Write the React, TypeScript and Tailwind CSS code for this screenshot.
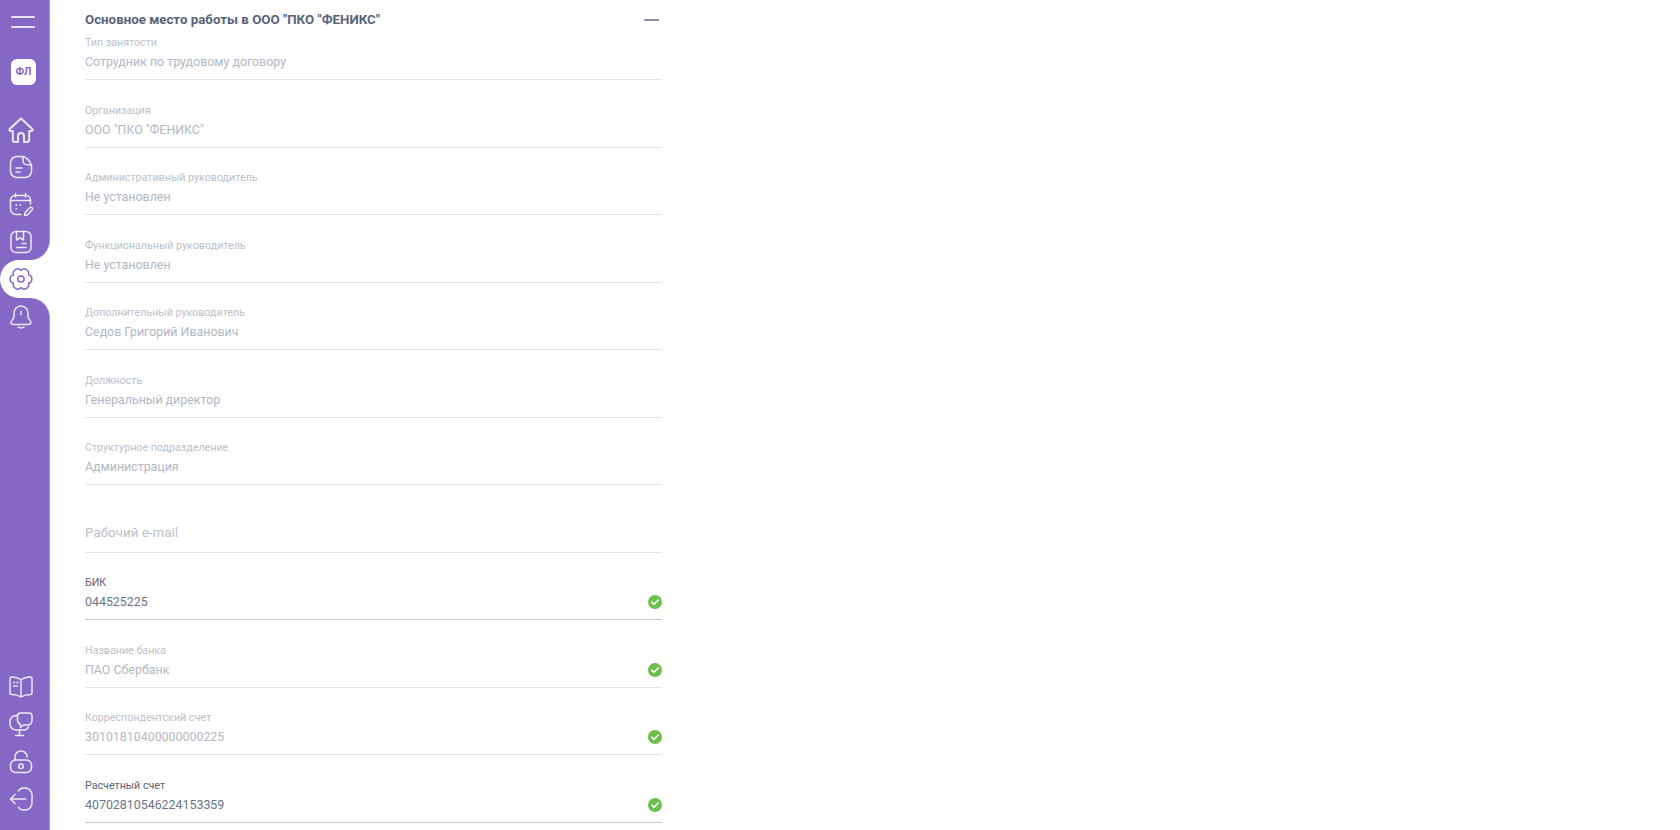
const stroke = { fill: "none", stroke: "currentColor", strokeWidth: 1.5, strokeLinecap: "round", strokeLinejoin: "round" } as const

const Glyph: React.FC<{ children: React.ReactNode }> = ({ children }) => (
  <svg viewBox="0 0 26 26" className="w-[26px] h-[26px]" {...stroke}>
    {children}
  </svg>
)

const HomeIcon = () => (
  <Glyph>
    <path
      strokeWidth={2}
      d="M13 1.5 L1.6 12 Q0.9 13.8 2.8 14 H4.8 V22.5 Q4.8 25 7.3 25 H10 V19 Q10 16 13 16 Q16 16 16 19 V25 H18.7 Q21.2 25 21.2 22.5 V14 H23.2 Q25.1 13.8 24.4 12 Z"
    />
  </Glyph>
)

const NoteIcon = () => (
  <Glyph>
    <path d="M15 2.5 H9 A6.5 6.5 0 0 0 2.5 9 V17 A6.5 6.5 0 0 0 9 23.5 H17 A6.5 6.5 0 0 0 23.5 17 V11 Q18 11.5 16 9.5 Q14.5 7.5 15 2.5 Q20.5 4 23.5 11" />
    <path d="M8 14 H14 M8 18 H12" />
  </Glyph>
)

const CalendarIcon = () => (
  <Glyph>
    <path d="M13 22.5 H8 A5.5 5.5 0 0 1 2.5 17 V8 A4.5 4.5 0 0 1 7 3.5 H18 A4.5 4.5 0 0 1 22.5 8 V12" />
    <path d="M2.5 8.5 H22.5 M7.5 1.5 V5 M17.5 1.5 V5" />
    <path d="M8 13 H8.6 M12 13 H12.6 M8 17 H8.6" />
    <path d="M16.5 23.5 L17 20.5 L22 15.5 Q23 14.8 24 15.8 Q25 16.8 24.2 17.8 L19.4 23 Z" />
  </Glyph>
)

const SavedIcon = () => (
  <Glyph>
    <rect x="3" y="2.5" width="20" height="21" rx="5" />
    <path d="M8.5 2.5 V11 L12 8.8 L15.5 11 V2.5" />
    <path d="M14 14.5 H18 M8.5 18.5 H18" />
  </Glyph>
)

const GearIcon = () => (
  <Glyph>
    <path d="M13 4.4 A4.4 4.4 0 0 1 20.45 8.7 A4.4 4.4 0 0 1 20.45 17.3 A4.4 4.4 0 0 1 13 21.6 A4.4 4.4 0 0 1 5.55 17.3 A4.4 4.4 0 0 1 5.55 8.7 A4.4 4.4 0 0 1 13 4.4 Z" />
    <circle cx="13" cy="13" r="3.1" />
  </Glyph>
)

const BellIcon = () => (
  <Glyph>
    <path d="M13 2 C8.5 2 6 5.5 6 9.5 V12.5 C6 15 2.5 17 3 19 Q3.4 20.5 6 20.5 H20 Q22.6 20.5 23 19 C23.5 17 20 15 20 12.5 V9.5 C20 5.5 17.5 2 13 2 Z" />
    <path d="M10 23 Q13 25 16 23 M13 7.5 V10.5" />
  </Glyph>
)

const BookIcon = () => (
  <Glyph>
    <path d="M13 6 C10 3.5 6.5 3 3.5 3 Q2 3 2 4.5 V19 Q2 20.5 3.5 20.5 C7 20.5 10 21 13 23 C16 21 19 20.5 22.5 20.5 Q24 20.5 24 19 V4.5 Q24 3 22.5 3 C19.5 3 16 3.5 13 6 Z M13 6 V23" />
    <path d="M5.5 8.5 H6.5 M9 8.5 H10 M5.5 12 H9.5" />
  </Glyph>
)

const MonitorIcon = () => (
  <Glyph>
    <path d="M9.5 4.5 H8 A6 6 0 0 0 2 10.5 V13 A6 6 0 0 0 8 19 H15 A5.5 5.5 0 0 0 20.5 16" />
    <path d="M9.5 5 A3 3 0 0 1 12.5 2 H21 A3 3 0 0 1 24 5 V9.5 A4.5 4.5 0 0 1 19.5 14 H15.5 L12.5 16.5 V13.5 Q9.5 12.5 9.5 9 Z" />
    <path d="M11.5 19 V24 M7.5 24.5 H15.5" />
  </Glyph>
)

const LockIcon = () => (
  <Glyph>
    <path d="M7 11 V7.5 A6 5.5 0 0 1 19 7.5 V8" />
    <rect x="2.5" y="11" width="21" height="12.5" rx="5" />
    <circle cx="13" cy="17.2" r="2.3" />
  </Glyph>
)

const LogoutIcon = () => (
  <Glyph>
    <path d="M10.5 5 Q12 2 15.5 2 H17 A7 7 0 0 1 24 9 V17 A7 7 0 0 1 17 24 H15.5 Q12 24 10.5 21" />
    <path d="M17.5 13 H2.5 M7 8.5 L2.5 13 L7 17.5" />
  </Glyph>
)

const NavItem: React.FC<{ children: React.ReactNode }> = ({ children }) => (
  <div className="h-[37.5px] flex items-center pl-[8px] text-white/85">{children}</div>
)

const Sidebar = () => (
  <aside className="w-[50px] h-[830px] shrink-0 flex flex-col bg-white">
    <div className="bg-[#8567c5] rounded-br-[20px] border-r border-[#a48dd6]">
      <div className="h-[44px] flex flex-col items-center justify-center gap-[8px]">
        <div className="ml-[-3px] w-[24px] h-[2px] bg-white/80 rounded" />
        <div className="ml-[-3px] w-[24px] h-[2px] bg-white/80 rounded" />
      </div>
      <div className="h-[67px] flex items-start pt-[15px] pl-[11px]">
        <div className="w-[25px] h-[26px] bg-white rounded-[6px] flex items-center justify-center text-[10.5px] font-bold text-[#8567c5]">
          ФЛ
        </div>
      </div>
      <div className="h-[149px]">
        <NavItem><HomeIcon /></NavItem>
        <NavItem><NoteIcon /></NavItem>
        <NavItem><CalendarIcon /></NavItem>
        <NavItem><SavedIcon /></NavItem>
      </div>
    </div>
    <div className="bg-[#8567c5]">
      <div className="h-[37.5px] bg-white rounded-l-[19px] flex items-center pl-[8px] text-[#8567c5]">
        <GearIcon />
      </div>
    </div>
    <div className="flex-1 bg-[#8567c5] rounded-tr-[20px] border-r border-[#a48dd6] flex flex-col">
      <div className="mt-[1px]">
        <NavItem><BellIcon /></NavItem>
      </div>
      <div className="mt-auto pb-[12px]">
        <NavItem><BookIcon /></NavItem>
        <NavItem><MonitorIcon /></NavItem>
        <NavItem><LockIcon /></NavItem>
        <NavItem><LogoutIcon /></NavItem>
      </div>
    </div>
  </aside>
)

const Check = () => (
  <svg viewBox="0 0 14 14" className="w-[14px] h-[14px] absolute right-0 top-[21px]">
    <circle cx="7" cy="7" r="7" fill="#6cc04a" />
    <path d="M3.8 7.2 L6 9.3 L10.2 5" fill="none" stroke="white" strokeWidth="1.6" strokeLinecap="round" strokeLinejoin="round" />
  </svg>
)

interface FieldProps {
  label: string
  value: string
  active?: boolean
  checked?: boolean
}

const Field: React.FC<FieldProps> = ({ label, value, active, checked }) => (
  <div className={`relative h-[46px] border-b ${active ? "border-[#c9c9d3]" : "border-[#e3e4e8]"}`}>
    <div className={`h-[17px] pt-[1px] text-[10.7px] leading-[16px] ${active ? "text-[#5d6172]" : "text-[#bcc1cc]"}`}>{label}</div>
    <div className={`h-[22px] text-[12.4px] leading-[22px] ${active ? "text-[#6a7388]" : "text-[#b2b8c4]"}`}>{value}</div>
    {checked && <Check />}
  </div>
)

const fields: FieldProps[] = [
  { label: "Тип занятости", value: "Сотрудник по трудовому договору" },
  { label: "Организация", value: 'ООО "ПКО "ФЕНИКС"' },
  { label: "Административный руководитель", value: "Не установлен" },
  { label: "Функциональный руководитель", value: "Не установлен" },
  { label: "Дополнительный руководитель", value: "Седов Григорий Иванович" },
  { label: "Должность", value: "Генеральный директор" },
  { label: "Структурное подразделение", value: "Администрация" },
]

const bankFields: FieldProps[] = [
  { label: "БИК", value: "044525225", active: true, checked: true },
  { label: "Название банка", value: "ПАО Сбербанк", checked: true },
  { label: "Корреспондентский счет", value: "30101810400000000225", checked: true },
  { label: "Расчетный счет", value: "40702810546224153359", active: true, checked: true },
]

export default function App() {
  return (
    <div className="flex h-[830px] overflow-hidden bg-white font-['Roboto',sans-serif]">
      <Sidebar />
      <main className="w-[577px] ml-[35px]">
        <div className="h-[34px] pt-[6px] flex items-center justify-between">
          <h2 className="text-[13.3px] font-bold text-[#5a6479]">Основное место работы в ООО "ПКО "ФЕНИКС"</h2>
          <div className="w-[15px] h-[2px] bg-[#8a94a8] mr-[3px]" />
        </div>
        <div className="flex flex-col gap-[21.5px]">
          {fields.map((f) => (
            <Field key={f.label} {...f} />
          ))}
          <div className="h-[46px] border-b border-[#e3e4e8] flex items-end pb-[8px] text-[13.4px] text-[#bcc1cc]">
            Рабочий e-mail
          </div>
          {bankFields.map((f) => (
            <Field key={f.label} {...f} />
          ))}
        </div>
      </main>
    </div>
  )
}
